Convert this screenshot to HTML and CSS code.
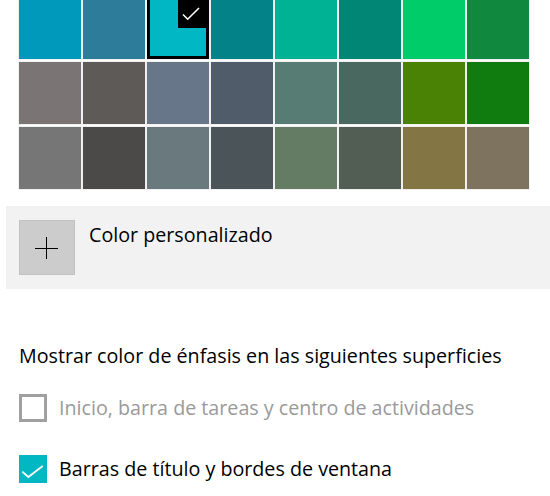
FILE: index.html
```html
<!DOCTYPE html>
<html lang="es">
<head>
<meta charset="utf-8">
<title>Colores</title>
<link rel="stylesheet" href="styles.css">
</head>
<body>
<div class="page">
  <div class="swatches">
    <div class="sw" style="background:#0099bc"></div>
    <div class="sw" style="background:#2d7d9a"></div>
    <div class="sw selected" style="background:#00b7c3">
      <span class="corner">
        <svg width="31" height="31" viewBox="0 0 31 31"><path d="M5 17.5 L9.7 22.2 L21 11" fill="none" stroke="#fff" stroke-width="1.6"/></svg>
      </span>
    </div>
    <div class="sw" style="background:#038387"></div>
    <div class="sw" style="background:#00b294"></div>
    <div class="sw" style="background:#018574"></div>
    <div class="sw" style="background:#00cc6a"></div>
    <div class="sw" style="background:#10893e"></div>

    <div class="sw" style="background:#7a7574"></div>
    <div class="sw" style="background:#5d5a58"></div>
    <div class="sw" style="background:#68768a"></div>
    <div class="sw" style="background:#515c6b"></div>
    <div class="sw" style="background:#567c73"></div>
    <div class="sw" style="background:#486860"></div>
    <div class="sw" style="background:#498205"></div>
    <div class="sw" style="background:#107c10"></div>

    <div class="sw" style="background:#767676"></div>
    <div class="sw" style="background:#4c4a48"></div>
    <div class="sw" style="background:#69797e"></div>
    <div class="sw" style="background:#4a5459"></div>
    <div class="sw" style="background:#647c64"></div>
    <div class="sw" style="background:#525e54"></div>
    <div class="sw" style="background:#847545"></div>
    <div class="sw" style="background:#7e735f"></div>
  </div>

  <div class="custom">
    <div class="plus">
      <svg width="24" height="24" viewBox="0 0 24 24"><path d="M0 12.5 H23 M11.5 1 V23" stroke="#000" stroke-width="1" fill="none"/></svg>
    </div>
    <div class="custom-label">Color personalizado</div>
  </div>

  <div class="heading">Mostrar color de énfasis en las siguientes superficies</div>

  <div class="option disabled">
    <span class="box"></span>
    <span class="label">Inicio, barra de tareas y centro de actividades</span>
  </div>
  <div class="option">
    <span class="box checked">
      <svg width="28" height="28" viewBox="0 0 28 28"><path d="M3.3 16.7 L9.3 22 L23.7 11" fill="none" stroke="#fff" stroke-width="1.8"/></svg>
    </span>
    <span class="label">Barras de título y bordes de ventana</span>
  </div>
</div>
</body>
</html>
```
FILE: styles.css
```css
html, body {
  margin: 0;
  padding: 0;
  background: #ffffff;
}
body {
  font-family: "Open Sans", "Noto Sans", sans-serif;
  color: #000;
  overflow: hidden;
}
.page {
  width: 550px;
  height: 496px;
  overflow: hidden;
}
.swatches {
  display: grid;
  grid-template-columns: repeat(8, 62px);
  grid-auto-rows: 62px;
  column-gap: 2px;
  row-gap: 3px;
  padding-left: 19px;
  margin-top: -3px;
}
.sw {
  box-sizing: border-box;
  box-shadow: 0 0 0 1px rgba(0,0,0,0.06);
}
.sw.selected {
  position: relative;
  border: 3px solid #000;
}
.corner {
  position: absolute;
  top: -3px;
  right: -3px;
  width: 31px;
  height: 31px;
  background: #000;
  display: block;
}
.corner svg { display: block; }
.custom {
  margin: 17px 0 0 6px;
  height: 83px;
  background: #f2f2f2;
  display: flex;
  align-items: flex-start;
  padding: 14px 0 0 13px;
  box-sizing: border-box;
}
.plus {
  width: 56px;
  height: 55px;
  box-sizing: border-box;
  background: #cccccc;
  border: 1px solid #c2c2c2;
  display: flex;
  align-items: center;
  justify-content: center;
}
.plus svg { display: block; }
.custom-label {
  margin-left: 14px;
  font-size: 19.7px;
  line-height: 26px;
  margin-top: 2px;
  color: #000;
}
.heading {
  margin: 54px 0 0 19px;
  font-size: 19.7px;
  line-height: 26px;
}
.option {
  display: flex;
  align-items: center;
  margin-left: 19px;
  height: 28px;
}
.option.disabled {
  margin-top: 25px;
}
.option + .option {
  margin-top: 33px;
}
.box {
  width: 28px;
  height: 28px;
  box-sizing: border-box;
  border: 3px solid #a0a0a0;
  flex: none;
}
.box.checked {
  border: none;
  background: #00b7c3;
}
.box svg { display: block; }
.label {
  margin-left: 12px;
  font-size: 19.7px;
  line-height: 26px;
}
.disabled .label {
  color: #9a9a9a;
}
```
